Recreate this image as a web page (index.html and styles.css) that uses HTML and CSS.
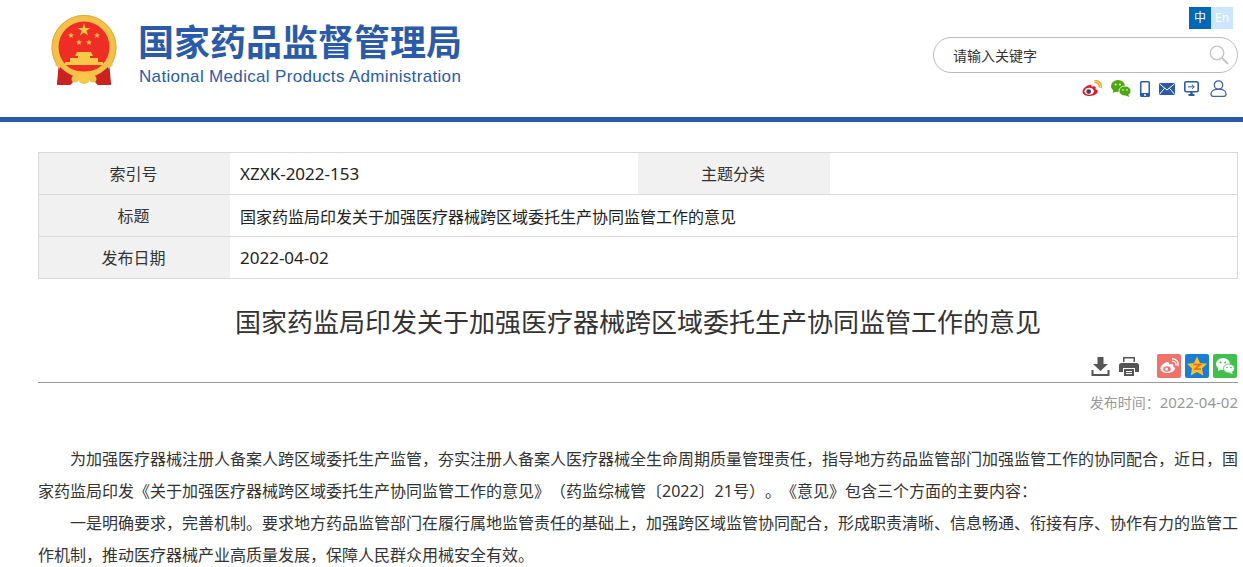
FILE: index.html
```html
<!DOCTYPE html>
<html lang="zh-CN">
<head>
  <meta charset="UTF-8" />
  <meta name="viewport" content="width=device-width, initial-scale=1.0"/>
  <title>国家药品监督管理局</title>
  <link rel="stylesheet" href="styles.css">
</head>
<body>
  <div class="header">
    <div class="brand">
      <svg class="emblem" width="66" height="71" viewBox="0 0 66 71">
        <defs>
          <polygon id="star" points="0,-1 .22,-.31 .95,-.31 .36,.12 .59,.81 0,.38 -.59,.81 -.36,.12 -.95,-.31 -.22,-.31"/>
        </defs>
        <path d="M8 46 L6 69 L19 70 L26 63 L40 63 L47 70 L60 69 L58 46 Z" fill="#cb221f"/>
        <circle cx="33" cy="32.500" r="32.500" fill="#f3c04a"/>
        <circle cx="33" cy="32.500" r="32" fill="none" stroke="#e6a834" stroke-width="1"/>
        <circle cx="33" cy="32" r="25.500" fill="#ee2e24"/>
        <g fill="#f7c948">
          <use href="#star" transform="translate(33 15) scale(6.800)"/>
          <use href="#star" transform="translate(20 20.500) scale(3.200)"/>
          <use href="#star" transform="translate(46 20.500) scale(3.200)"/>
          <use href="#star" transform="translate(28 27.500) scale(3.200)"/>
          <use href="#star" transform="translate(38 27.500) scale(3.200)"/>
          <path d="M26 37 H40 L42 41 H39 V43 H47 V47 H19 V43 H27 V41 H24 Z"/>
          <path d="M14 47 H52 V50 H14 Z"/>
        </g>
        <path d="M7 47 Q33 66 59 47 L62 50 Q33 72 4 50 Z" fill="#f3c04a"/>
        <path d="M9 52 L6 70 L19 70 L25 62 Q16 59 9 52 Z M57 52 L60 70 L47 70 L41 62 Q50 59 57 52 Z" fill="#cb221f"/>
        <circle cx="33" cy="63" r="6" fill="#f7c948"/>
        <circle cx="24" cy="64" r="3.500" fill="#f3c04a"/>
        <circle cx="42" cy="64" r="3.500" fill="#f3c04a"/>
      </svg>
      <div class="brand-text">
        <div class="brand-cn">国家药品监督管理局</div>
        <div class="brand-en">National Medical Products Administration</div>
      </div>
    </div>
    <div class="tools">
      <div class="lang">
        <span class="lang-on">中</span><span class="lang-off">En</span>
      </div>
      <div class="search">
        <span class="search-text">请输入关键字</span>
        <svg width="20" height="20" viewBox="0 0 20 20" fill="none" stroke="#c4c4c4">
          <circle cx="8" cy="8" r="6.800" stroke-width="1.300"/>
          <path d="M13 13 L19 19" stroke-width="1.800"/>
        </svg>
      </div>
      <div class="links">
        <svg width="20" height="17" viewBox="0 0 21 18">
          <path d="M8.500 5 C4 6 0.500 9.500 0.500 12.500 C0.500 15.500 4 17 8 17 C13 17 16.500 14.500 16.500 12 C16.500 10.500 15 10 14.200 9.700 C14.800 8 14.300 6.700 12.500 6.700 C11.500 6.700 10.500 7 9.800 7.300 C10 5.500 9.700 4.800 8.500 5 Z" fill="#e6162d"/>
          <ellipse cx="7.500" cy="12" rx="5" ry="3.700" fill="#fff"/>
          <circle cx="7" cy="12.300" r="2.500" fill="#444"/>
          <path d="M13 3 C16 2 19 4.500 18 8 M13 0.800 C17.500 -0.200 21.500 4 20 8.500" fill="none" stroke="#f5a623" stroke-width="1.600"/>
        </svg>
        <svg width="20" height="17" viewBox="0 0 20 17" fill="#4ca80f">
          <ellipse cx="7" cy="6" rx="7" ry="6"/>
          <path d="M2.500 9 L2 13 L6 11 Z"/>
          <ellipse cx="14" cy="11" rx="6" ry="5" stroke="#fff" stroke-width="0.800"/>
          <path d="M17 14 L18.500 17 L14.500 15.500 Z"/>
          <circle cx="4.600" cy="4.500" r="1" fill="#fff"/>
          <circle cx="9" cy="4.500" r="1" fill="#fff"/>
          <circle cx="12" cy="10" r="0.800" fill="#fff"/>
          <circle cx="16" cy="10" r="0.800" fill="#fff"/>
        </svg>
        <svg width="10" height="16" viewBox="0 0 10 16">
          <rect x="0" y="0" width="10" height="16" rx="1.500" fill="#2b5ba8"/>
          <rect x="1.500" y="1.500" width="7" height="10.500" fill="#fff"/>
          <circle cx="5" cy="14" r="1" fill="#fff"/>
        </svg>
        <svg width="16" height="12" viewBox="0 0 16 12">
          <rect width="16" height="12" rx="1" fill="#2b5ba8"/>
          <path d="M0.500 0.800 L8 7 L15.500 0.800 M0.500 11.300 L5.600 5.200 M15.500 11.300 L10.400 5.200" fill="none" stroke="#fff" stroke-width="1"/>
        </svg>
        <svg width="15" height="15" viewBox="0 0 15 15">
          <rect x="0.800" y="0.800" width="13.400" height="10" rx="1.500" fill="#fff" stroke="#2b5ba8" stroke-width="1.600"/>
          <path d="M4 5.800 H10 M8 3.800 L10.300 5.800 L8 7.800" fill="none" stroke="#2b5ba8" stroke-width="1"/>
          <path d="M6.300 11 H8.700 V13 H10.500 V15 H4.500 V13 H6.300 Z" fill="#2b5ba8"/>
        </svg>
        <svg class="link-user" width="17" height="17" viewBox="0 0 17 17" fill="none" stroke="#3f62ae" stroke-width="1.300">
          <circle cx="8.500" cy="5" r="4.200"/>
          <path d="M1 14 C1 11 4 9.600 6 9.400 H11 C13 9.600 16 11 16 14 C16 15.500 15 16.300 14 16.300 H3 C2 16.300 1 15.500 1 14 Z"/>
        </svg>
      </div>
    </div>
  </div>

  <div class="content">
    <div class="info-table">
      <div class="info-row">
        <div class="info-label">索引号</div>
        <div class="info-value latin">XZXK-2022-153</div>
        <div class="info-label">主题分类</div>
        <div class="info-value"></div>
      </div>
      <div class="info-row">
        <div class="info-label">标题</div>
        <div class="info-value info-wide">国家药监局印发关于加强医疗器械跨区域委托生产协同监管工作的意见</div>
      </div>
      <div class="info-row">
        <div class="info-label">发布日期</div>
        <div class="info-value info-wide latin">2022-04-02</div>
      </div>
    </div>

    <h1 class="title">国家药监局印发关于加强医疗器械跨区域委托生产协同监管工作的意见</h1>

    <div class="share">
      <svg class="share-down" width="19" height="19" viewBox="0 0 19 19" fill="#555">
        <path d="M6.500 0 H12.500 V7 H17 L9.500 14 L2 7 H6.500 Z"/>
        <path d="M0.500 13 H2.500 V17 H16.500 V13 H18.500 V19 H0.500 Z"/>
      </svg>
      <svg class="share-print" width="20" height="19" viewBox="0 0 20 19" fill="#555">
        <path d="M4 0 H16 V5 H14.500 V1.500 H5.500 V5 H4 Z"/>
        <path d="M2.500 6 H17.500 A2.500 2.500 0 0 1 20 8.500 V15 H16 V11 H4 V15 H0 V8.500 A2.500 2.500 0 0 1 2.500 6 Z"/>
        <path d="M5 12 H15 V19 H5 Z M7 14 V15 H13 V14 Z M7 16 V17 H13 V16 Z" fill-rule="evenodd"/>
      </svg>
      <svg class="share-weibo" width="24" height="24" viewBox="0 0 24 24">
        <rect width="24" height="24" rx="2" fill="#f0736b"/>
        <path d="M10 8 C6.500 9 3.500 12 3.500 14.500 C3.500 17.500 7 19 10.500 19 C15 19 18 16.500 18 14.500 C18 13.300 17 12.800 16.200 12.500 C16.700 11 16 10 14.500 10 C13.500 10 12.800 10.300 12 10.600 C12.200 8.500 11.500 7.600 10 8 Z" fill="#fff"/>
        <ellipse cx="10" cy="15" rx="3.800" ry="2.700" fill="#f0736b"/>
        <circle cx="9.500" cy="15" r="1.500" fill="#fff"/>
        <path d="M15 7.500 C17.500 7 19.500 9 19 11.500 M15 5 C19 4.200 22 8 21 12" fill="none" stroke="#fff" stroke-width="1.400"/>
      </svg>
      <svg class="share-qzone" width="24" height="24" viewBox="0 0 24 24">
        <rect width="24" height="24" rx="2" fill="#1a7ed6"/>
        <polygon points="12,2.500 15,9 22,9.800 17,14.500 18.300,21.500 12,18 5.700,21.500 7,14.500 2,9.800 9,9" fill="#fcc21b"/>
        <path d="M8.500 10.500 H15.500 L10 15 H16" fill="none" stroke="#e0662a" stroke-width="1.500"/>
      </svg>
      <svg class="share-wechat" width="24" height="24" viewBox="0 0 24 24" fill="#fff">
        <rect width="24" height="24" rx="2" fill="#3fc04a"/>
        <ellipse cx="10" cy="10" rx="7" ry="6"/>
        <path d="M5.500 13 L5 17 L9 15 Z"/>
        <ellipse cx="16" cy="14.500" rx="5.500" ry="4.500" stroke="#3fc04a" stroke-width="0.800"/>
        <path d="M18.500 17.500 L20 20 L16.500 19 Z"/>
        <circle cx="7.600" cy="8.500" r="1" fill="#3fc04a"/>
        <circle cx="12.200" cy="8.500" r="1" fill="#3fc04a"/>
        <circle cx="14" cy="13.500" r="0.800" fill="#3fc04a"/>
        <circle cx="18" cy="13.500" r="0.800" fill="#3fc04a"/>
      </svg>
    </div>

    <div class="pubdate">发布时间：<span class="pubdate-num">2022-04-02</span></div>

    <div class="article">
      <p>为加强医疗器械注册人备案人跨区域委托生产监管，夯实注册人备案人医疗器械全生命周期质量管理责任，指导地方药品监管部门加强监管工作的协同配合，近日，国家药监局印发《关于加强医疗器械跨区域委托生产协同监管工作的意见》（药监综械管〔2022〕21号）。《意见》包含三个方面的主要内容：</p>
      <p>一是明确要求，完善机制。要求地方药品监管部门在履行属地监管责任的基础上，加强跨区域监管协同配合，形成职责清晰、信息畅通、衔接有序、协作有力的监管工作机制，推动医疗器械产业高质量发展，保障人民群众用械安全有效。</p>
    </div>
  </div>
</body>
</html>
```

FILE: styles.css
```css
* {
  box-sizing: border-box;
  margin: 0;
  padding: 0;
}
body {
  background: #fff;
  color: #333;
  font-family: "Noto Sans", "Noto Sans CJK SC", sans-serif;
  text-spacing-trim: space-all;
  overflow-x: hidden;
}
svg {
  display: block;
  flex: none;
}
.latin {
  font-size: 17px;
}

/* header */
.header {
  height: 122px;
  border-bottom: 5px solid #2b5ba8;
  display: flex;
  justify-content: space-between;
  padding: 0 5px 0 51px;
}
.brand {
  display: flex;
  gap: 21px;
  padding-top: 15px;
}
.brand-text {
  color: #2b5ba8;
}
.brand-cn {
  font-size: 36px;
  font-weight: 700;
  line-height: 50px;
  margin-top: 3px;
  white-space: nowrap;
}
.brand-en {
  font-family: "Liberation Sans", sans-serif;
  font-size: 17px;
  letter-spacing: 0.33px;
  line-height: 20px;
  margin-top: -1px;
  margin-left: 1px;
  white-space: nowrap;
}
.tools {
  width: 305px;
  padding-top: 7px;
  display: flex;
  flex-direction: column;
  align-items: flex-end;
}
.lang {
  display: flex;
  font-size: 12px;
  line-height: 22px;
  color: #fff;
  text-align: center;
  margin-right: 5px;
}
.lang-on {
  width: 22px;
  background: #0068b7;
}
.lang-off {
  width: 22px;
  background: #cce6ff;
}
.search {
  width: 305px;
  height: 36px;
  margin-top: 8px;
  border: 1px solid #bbb;
  border-radius: 18px;
  display: flex;
  align-items: center;
  justify-content: space-between;
  padding: 0 8px 0 19px;
}
.search-text {
  font-size: 14px;
}
.links {
  display: flex;
  align-items: center;
  gap: 9px;
  margin-top: 7px;
  margin-right: 11px;
}
.link-user {
  margin-left: 2px;
}

/* content */
.content {
  width: 1200px;
  margin-left: 38px;
}
.info-table {
  margin-top: 30px;
  border: 1px solid #d9d9d9;
  font-size: 16px;
}
.info-row {
  display: flex;
  height: 42px;
  border-bottom: 1px solid #d9d9d9;
}
.info-row:last-child {
  height: 41px;
  border-bottom: 0;
}
.info-label {
  width: 191px;
  background: #f1f1f1;
  display: flex;
  align-items: center;
  justify-content: center;
  flex: none;
  padding: 0 2px 2px 0;
}
.info-value {
  width: 408px;
  display: flex;
  align-items: center;
  padding-left: 10px;
  flex: none;
  color: #222;
}
.info-row .info-label:nth-child(3) {
  width: 192px;
}
.info-wide {
  width: auto;
  flex: 1;
}
.title {
  font-size: 26px;
  font-weight: 400;
  line-height: 36px;
  text-align: center;
  margin-top: 25px;
  white-space: nowrap;
}
.share {
  display: flex;
  align-items: center;
  justify-content: flex-end;
  height: 29px;
  border-bottom: 1px solid #999;
  padding: 0 1px 4px 0;
  margin-top: 14px;
}
.share-down {
  margin-right: 9px;
}
.share-print {
  margin-right: 18px;
}
.share-weibo, .share-qzone {
  margin-right: 4px;
}
.pubdate {
  font-size: 14px;
  line-height: 20px;
  color: #999;
  text-align: right;
  margin-top: 9px;
}
.pubdate-num {
  font-size: 15px;
}
.article {
  margin-top: 30px;
  font-size: 16px;
  line-height: 32px;
}
.article p {
  text-indent: 32px;
  text-align: justify;
}
```
